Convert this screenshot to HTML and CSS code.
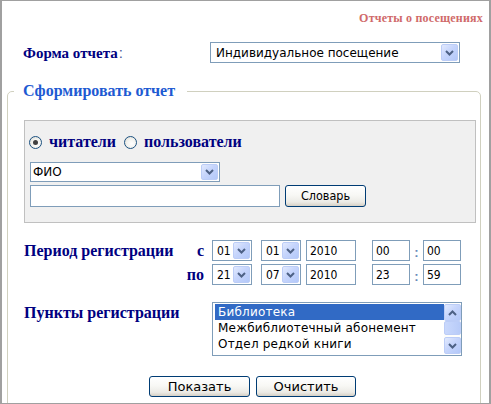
FILE: index.html
```html
<!DOCTYPE html>
<html lang="ru">
<head>
<meta charset="utf-8">
<title>Отчеты о посещениях</title>
<link rel="stylesheet" href="styles.css">
</head>
<body>
<div class="window">
  <div class="title">Отчеты о посещениях</div>

  <div class="form-row">
    <span class="label">Форма отчета<span class="colon">:</span></span>
    <div class="select w-form">
      <span class="val">Индивидуальное посещение</span>
      <span class="arr"><svg width="9" height="6" viewBox="0 0 9 6"><path d="M1 1 L4.5 4.5 L8 1" fill="none" stroke="#4d6185" stroke-width="2"/></svg></span>
    </div>
  </div>

  <fieldset class="fs">
    <legend>Сформировать отчет</legend>

    <div class="searchbox">
      <div class="radios">
        <span class="radio checked"></span><span class="rlabel">читатели</span>
        <span class="radio"></span><span class="rlabel">пользователи</span>
      </div>
      <div class="select w-fio">
        <span class="val">ФИО</span>
        <span class="arr"><svg width="9" height="6" viewBox="0 0 9 6"><path d="M1 1 L4.5 4.5 L8 1" fill="none" stroke="#4d6185" stroke-width="2"/></svg></span>
      </div>
      <div class="search-line">
        <div class="input w-search"></div>
        <button class="btn w-dict" type="button">Словарь</button>
      </div>
    </div>

    <div class="period">
      <div class="plabel w-period">Период регистрации</div>
      <div class="dates">
        <div class="drow">
          <span class="pre">с</span>
          <div class="select num w-day"><span class="val">01</span><span class="arr"><svg width="9" height="6" viewBox="0 0 9 6"><path d="M1 1 L4.5 4.5 L8 1" fill="none" stroke="#4d6185" stroke-width="2"/></svg></span></div>
          <div class="select num w-month"><span class="val">01</span><span class="arr"><svg width="9" height="6" viewBox="0 0 9 6"><path d="M1 1 L4.5 4.5 L8 1" fill="none" stroke="#4d6185" stroke-width="2"/></svg></span></div>
          <div class="input num w-year">2010</div>
          <div class="input num w-time">00</div>
          <span class="sep">:</span>
          <div class="input num w-time">00</div>
        </div>
        <div class="drow">
          <span class="pre">по</span>
          <div class="select num w-day"><span class="val">21</span><span class="arr"><svg width="9" height="6" viewBox="0 0 9 6"><path d="M1 1 L4.5 4.5 L8 1" fill="none" stroke="#4d6185" stroke-width="2"/></svg></span></div>
          <div class="select num w-month"><span class="val">07</span><span class="arr"><svg width="9" height="6" viewBox="0 0 9 6"><path d="M1 1 L4.5 4.5 L8 1" fill="none" stroke="#4d6185" stroke-width="2"/></svg></span></div>
          <div class="input num w-year">2010</div>
          <div class="input num w-time">23</div>
          <span class="sep">:</span>
          <div class="input num w-time">59</div>
        </div>
      </div>
    </div>

    <div class="points">
      <div class="plabel w-points">Пункты регистрации</div>
      <div class="listbox">
        <div class="items">
          <div class="item selected">Библиотека</div>
          <div class="item">Межбиблиотечный абонемент</div>
          <div class="item">Отдел редкой книги</div>
        </div>
        <div class="scrollbar">
          <span class="sbtn"><svg width="9" height="6" viewBox="0 0 9 6"><path d="M1 5 L4.5 1.5 L8 5" fill="none" stroke="#4d6185" stroke-width="2"/></svg></span>
          <span class="thumb"></span>
          <span class="track"></span>
          <span class="sbtn"><svg width="9" height="6" viewBox="0 0 9 6"><path d="M1 1 L4.5 4.5 L8 1" fill="none" stroke="#4d6185" stroke-width="2"/></svg></span>
        </div>
      </div>
    </div>

    <div class="buttons">
      <button class="btn big w-show" type="button">Показать</button>
      <button class="btn big w-clear" type="button">Очистить</button>
    </div>
  </fieldset>
</div>
</body>
</html>
```

FILE: styles.css
```css
* { box-sizing: border-box; }

html, body {
  margin: 0;
  padding: 0;
  background: #ffffff;
}

body {
  font-family: "Liberation Serif", "Times New Roman", serif;
  color: #000080;
}

.window {
  width: 491px;
  height: 404px;
  border: 1px solid #a0a0a0;
  border-left-width: 2px;
  border-right-width: 2px;
  overflow: hidden;
  background: #ffffff;
}

.title {
  margin-top: 10px;
  padding-right: 6px;
  text-align: right;
  font-weight: bold;
  font-size: 12px;
  letter-spacing: 0.2px;
  line-height: 14px;
  color: #d06a6a;
}

.form-row {
  display: flex;
  align-items: center;
  margin-top: 17px;
  padding-left: 21px;
  height: 21px;
}

.label {
  width: 187px;
  font-weight: bold;
  font-size: 15px;
  color: #000080;
}

.colon {
  font-family: "Liberation Sans", Arial, sans-serif;
  font-weight: normal;
  color: #4a5a9a;
  padding-left: 1px;
}

/* XP-like controls */
.select {
  display: flex;
  align-items: stretch;
  height: 21px;
  border: 1px solid #7f9db9;
  background: #ffffff;
  padding: 1px;
  font-family: "DejaVu Sans", "Liberation Sans", sans-serif;
  font-size: 12px;
  color: #000000;
}

.select .val {
  flex: 1;
  display: flex;
  align-items: center;
  padding-left: 3px;
  white-space: nowrap;
  overflow: hidden;
}

.num {
  font-family: "DejaVu Sans Condensed", "Liberation Sans", sans-serif;
}

.arr, .sbtn {
  width: 17px;
  height: 17px;
  flex: none;
  display: flex;
  align-items: center;
  justify-content: center;
  background: linear-gradient(135deg, #e2eafe 0%, #c6d5fc 45%, #b3c8f9 100%);
  border: 1px solid #bccdf7;
  border-radius: 2px;
}

.w-form { width: 250px; }
.w-form .val { padding-left: 4px; }
.w-fio { width: 190px; height: 20px; }
.w-fio .val { padding-left: 1px; }
.w-fio .arr { height: 16px; }
.w-day, .w-month { width: 40px; }
.w-day .val, .w-month .val { padding-left: 3px; }

.input {
  height: 21px;
  border: 1px solid #7f9db9;
  background: #ffffff;
  padding-left: 3px;
  display: flex;
  align-items: center;
  font-family: "DejaVu Sans", "Liberation Sans", sans-serif;
  font-size: 12px;
  color: #000000;
}

.input.num {
  font-family: "DejaVu Sans Condensed", "Liberation Sans", sans-serif;
}

.btn {
  margin: 0;
  padding: 0;
  height: 22px;
  border: 1px solid #003c74;
  border-radius: 3px;
  background: linear-gradient(180deg, #ffffff 0%, #f8f8f5 45%, #ecebe6 80%, #d6d0c5 100%);
  font-family: "DejaVu Sans Condensed", "Liberation Sans", sans-serif;
  font-size: 12.5px;
  color: #000000;
}

.btn.big {
  font-family: "DejaVu Sans", "Liberation Sans", sans-serif;
  font-size: 13px;
}

/* fieldset */
.fs {
  margin: 19px 0 0 5px;
  width: 474px;
  height: 340px;
  padding: 0 4px 0 16px;
  border: 1px solid #d0d0bf;
  border-radius: 5px;
}

.fs legend {
  margin-left: -10px;
  padding: 0 12px 0 9px;
  font-weight: bold;
  font-size: 16px;
  line-height: 18px;
  color: #1e5ad2;
}

.searchbox {
  margin-top: 20px;
  border: 1px solid #c0c0c0;
  background: #f0f0f0;
  padding: 13px 0 15px 5px;
}

.radios {
  display: flex;
  align-items: center;
  height: 16px;
  margin-left: -1px;
}

.radio {
  width: 13px;
  height: 13px;
  border-radius: 50%;
  border: 1px solid #1c5180;
  background: radial-gradient(circle at 60% 60%, #ffffff 0%, #f2f2ee 50%, #d6d6cf 100%);
  display: flex;
  align-items: center;
  justify-content: center;
  flex: none;
}

.radio.checked::after {
  content: "";
  width: 5px;
  height: 5px;
  border-radius: 50%;
  background: #404040;
}

.rlabel {
  margin: 0 8px 0 7px;
  font-weight: bold;
  font-size: 16px;
  color: #000080;
}

.w-fio { margin-top: 12px; }

.search-line {
  display: flex;
  align-items: center;
  gap: 5px;
  margin-top: 2px;
  height: 23px;
}

.w-search { width: 250px; height: 22px; margin-top: 1px; }
.w-dict { width: 81px; }

/* period */
.period {
  display: flex;
  margin-top: 17px;
}

.plabel {
  font-weight: bold;
  font-size: 16px;
  line-height: 21px;
  color: #000080;
  white-space: nowrap;
}

.w-period { width: 156px; }
.w-points { width: 188px; }

.dates {
  display: flex;
  flex-direction: column;
  gap: 3px;
}

.drow {
  display: flex;
  align-items: center;
  height: 21px;
}

.pre {
  width: 24px;
  margin-right: 8px;
  text-align: right;
  font-weight: bold;
  font-size: 16px;
  color: #000080;
}

.drow .w-day { margin-right: 9px; }
.drow .w-month { margin-right: 5px; }
.w-year { width: 50px; margin-right: 16px; }
.w-time { width: 38px; }

.sep {
  width: 13px;
  text-align: center;
  font-family: "Liberation Sans", sans-serif;
  font-weight: bold;
  font-size: 13px;
  color: #6a8ab8;
  padding-top: 3px;
}

/* points */
.points {
  display: flex;
  margin-top: 17px;
}

.listbox {
  width: 250px;
  height: 54px;
  border: 1px solid #7f9db9;
  background: #ffffff;
  display: flex;
  padding: 1px 0 1px 2px;
}

.items {
  flex: 1;
  font-family: "DejaVu Sans", "Liberation Sans", sans-serif;
  font-size: 12px;
  letter-spacing: 0.2px;
  color: #000000;
}

.item {
  height: 16px;
  line-height: 16px;
  padding-left: 3px;
  white-space: nowrap;
}

.item.selected {
  background: #316ac5;
  color: #ffffff;
}

.scrollbar {
  width: 17px;
  display: flex;
  flex-direction: column;
  background: #fdfdfb;
}

.thumb {
  height: 14px;
  flex: none;
  background: linear-gradient(90deg, #c9d8fc, #b8cbf8);
  border: 1px solid #bccdf7;
  border-radius: 2px;
}

.track { flex: 1; }

/* buttons */
.buttons {
  display: flex;
  gap: 6px;
  margin-top: 20px;
  padding-left: 125px;
}

.w-show { width: 101px; height: 21px; }
.w-clear { width: 100px; height: 21px; }
```
